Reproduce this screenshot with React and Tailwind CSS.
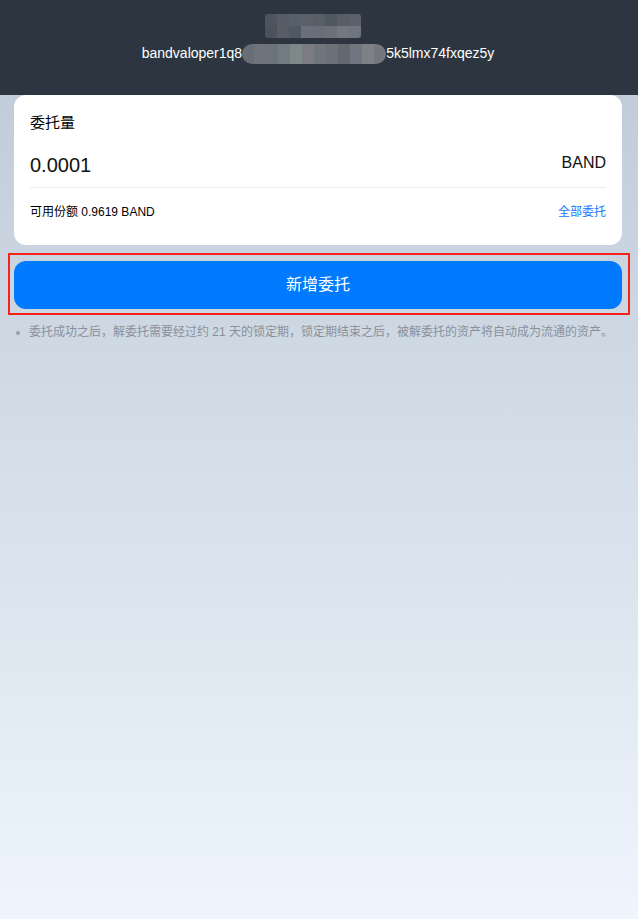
import React from "react";

const top1 = ["#4e5560", "#555c66", "#56606a", "#5d606b", "#575e68", "#4f5761", "#575e68", "#5b606b"];
const top2 = ["#4b525c", "#565d67", "#4f5961", "#6a707b", "#676e76", "#6a717b", "#727880", "#6f7580"];
const addr = ["#686e77", "#6f747c", "#6c737b", "#737b82", "#7e8889", "#7b7b80", "#71767d", "#6a7179", "#64696f", "#707680", "#7d8085", "#74777d"];

export default function App() {
  return (
    <div
      className="min-h-[919px] w-full flex flex-col bg-gradient-to-b from-[#bcc8d5] to-[#eef5fd]"
      style={{ fontFamily: '"Liberation Sans", Arial, "Noto Sans CJK SC", sans-serif' }}
    >
      <div className="bg-[#2d3640] h-[95px] flex flex-col items-center pt-[14px]">
        <div className="flex flex-col rounded-[3px] overflow-hidden mr-[12px]">
          <div className="flex">
            {top1.map((c, i) => (
              <div key={i} className="w-[12px] h-[12px]" style={{ backgroundColor: c }} />
            ))}
          </div>
          <div className="flex">
            {top2.map((c, i) => (
              <div key={i} className="w-[12px] h-[12px]" style={{ backgroundColor: c }} />
            ))}
          </div>
        </div>
        <div className="mt-[4px] flex items-center text-white text-[14px] leading-[20px] mr-[2px]">
          <span>bandvaloper1q8</span>
          <span className="inline-flex rounded-full overflow-hidden h-[20px] mt-[2px]">
            {addr.map((c, i) => (
              <span key={i} className="w-[12px] h-[20px] block" style={{ backgroundColor: c }} />
            ))}
          </span>
          <span>5k5lmx74fxqez5y</span>
        </div>
      </div>

      <div className="ml-[14px] mr-[16px] bg-white rounded-[12px] px-[16px] pt-[17px] pb-[24px]">
        <div className="text-[15px] leading-[22px] text-black">委托量</div>
        <div className="flex items-center justify-between mt-[17px] pb-[8px] border-b border-[#ececec]">
          <span className="text-[20px] leading-[28px] text-[#111]">0.0001</span>
          <span className="text-[16px] leading-[22px] text-[#111] -mt-[4px]">BAND</span>
        </div>
        <div className="flex items-center justify-between mt-[15px]">
          <span className="text-[12px] leading-[18px] text-black">可用份额 0.9619 BAND</span>
          <span className="text-[12px] leading-[18px] text-[#1677ff]">全部委托</span>
        </div>
      </div>

      <div className="ml-[8px] mr-[8px] mt-[8px] border-2 border-[#f5221b] pt-[6px] pb-[4px] pl-[4px] pr-[6px]">
        <button className="w-full h-[48px] rounded-[12px] bg-[#007aff] text-white text-[16px] flex items-center justify-center">
          新增委托
        </button>
      </div>

      <div className="flex items-start mt-[8px] pl-[16px] pr-[8px]">
        <span className="w-[4px] h-[4px] rounded-full bg-[#9aa0a8] mt-[8px] mr-[9px] shrink-0" />
        <span className="text-[12px] leading-[18px] text-[#8a9099]">
          委托成功之后，解委托需要经过约 21 天的锁定期，锁定期结束之后，被解委托的资产将自动成为流通的资产。
        </span>
      </div>
    </div>
  );
}
